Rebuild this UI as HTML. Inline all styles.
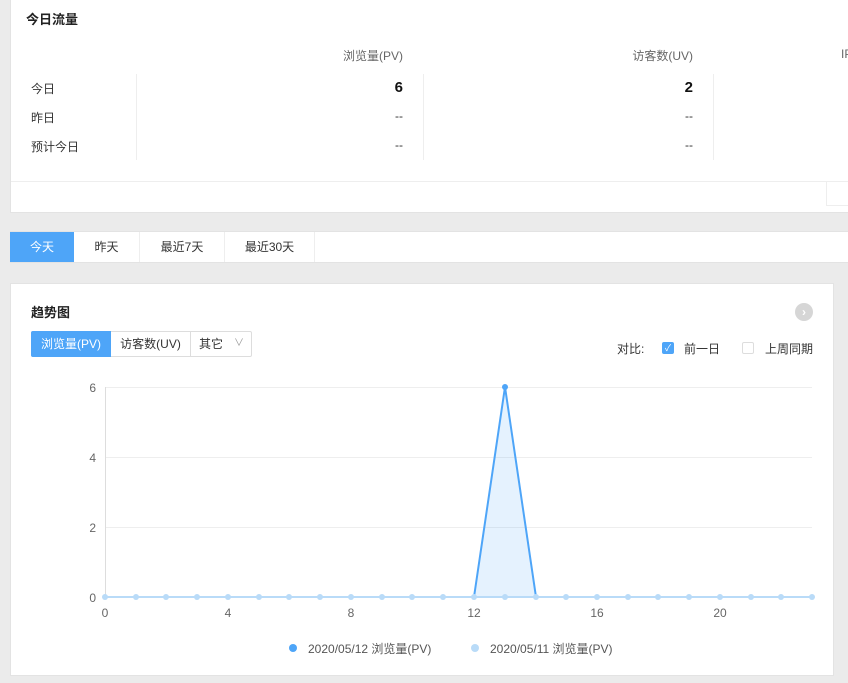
<!DOCTYPE html>
<html><head><meta charset="utf-8"><style>
*{margin:0;padding:0;box-sizing:border-box}
body{width:848px;height:683px;background:#ebebeb;font-family:"Liberation Sans","Noto Sans CJK SC",sans-serif;font-size:12px;color:#333;position:relative;overflow:hidden}
.a{position:absolute}
.card{background:#fff;border:1px solid #e3e3e3}
</style></head><body>
<div class="a card" style="left:10px;top:-1px;width:850px;height:214px"></div>
<div class="a" style="left:26px;top:9px;font-size:13px;font-weight:bold;color:#222">今日流量</div>
<div class="a" style="left:300px;top:47px;width:103px;text-align:right;color:#666">浏览量(PV)</div>
<div class="a" style="left:590px;top:47px;width:103px;text-align:right;color:#666">访客数(UV)</div>
<div class="a" style="left:841px;top:47px;color:#666">IP</div>
<div class="a" style="left:136px;top:74px;width:1px;height:86px;background:#eee"></div>
<div class="a" style="left:423px;top:74px;width:1px;height:86px;background:#eee"></div>
<div class="a" style="left:713px;top:74px;width:1px;height:86px;background:#eee"></div>
<div class="a" style="left:31px;top:80px">今日</div>
<div class="a" style="left:31px;top:109px">昨日</div>
<div class="a" style="left:31px;top:138px">预计今日</div>
<div class="a" style="left:300px;top:79px;width:103px;text-align:right;font-size:15px;font-weight:bold;color:#111">6</div>
<div class="a" style="left:590px;top:79px;width:103px;text-align:right;font-size:15px;font-weight:bold;color:#111">2</div>
<div class="a" style="left:300px;top:109px;width:103px;text-align:right">--</div>
<div class="a" style="left:590px;top:109px;width:103px;text-align:right">--</div>
<div class="a" style="left:300px;top:138px;width:103px;text-align:right">--</div>
<div class="a" style="left:590px;top:138px;width:103px;text-align:right">--</div>
<div class="a" style="left:11px;top:181px;width:840px;height:1px;background:#eee"></div>
<div class="a" style="left:826px;top:182px;width:30px;height:24px;border-left:1px solid #eee;border-bottom:1px solid #eee"></div>

<div class="a" style="left:10px;top:231px;width:840px;height:32px;background:#fff;border-top:1px solid #e3e3e3;border-bottom:1px solid #e3e3e3"></div>
<div class="a" style="left:10px;top:232px;width:64px;height:30px;background:#4ea5f8;color:#fff;text-align:center;line-height:30px">今天</div>
<div class="a" style="left:74px;top:232px;width:66px;height:30px;border-right:1px solid #eee;text-align:center;line-height:30px">昨天</div>
<div class="a" style="left:140px;top:232px;width:85px;height:30px;border-right:1px solid #eee;text-align:center;line-height:30px">最近7天</div>
<div class="a" style="left:225px;top:232px;width:90px;height:30px;border-right:1px solid #eee;text-align:center;line-height:30px">最近30天</div>

<div class="a card" style="left:10px;top:283px;width:824px;height:393px"></div>
<div class="a" style="left:31px;top:302px;font-size:13px;font-weight:bold;color:#222">趋势图</div>
<div class="a" style="left:795px;top:303px;width:18px;height:18px;border-radius:50%;background:#d6d6d6;color:#fff;text-align:center;line-height:18px;font-size:12px;font-weight:bold">›</div>
<div class="a" style="left:31px;top:331px;width:221px;height:26px;border:1px solid #ddd;border-radius:2px"></div>
<div class="a" style="left:31px;top:331px;width:80px;height:26px;background:#4ea5f8;color:#fff;text-align:center;line-height:26px;border-radius:2px 0 0 2px">浏览量(PV)</div>
<div class="a" style="left:111px;top:332px;width:80px;height:24px;border-right:1px solid #ddd;text-align:center;line-height:24px">访客数(UV)</div>
<div class="a" style="left:199px;top:332px;line-height:24px">其它</div>
<div class="a" style="left:234px;top:332px;line-height:24px;color:#999;font-size:10px">∨</div>
<div class="a" style="left:617px;top:340px">对比:</div>
<div class="a" style="left:662px;top:342px;width:12px;height:12px;background:#4ea5f8;border-radius:2px;color:#fff;font-size:9px;line-height:12px;text-align:center">✓</div>
<div class="a" style="left:684px;top:340px">前一日</div>
<div class="a" style="left:742px;top:342px;width:12px;height:12px;border:1px solid #ddd;border-radius:2px"></div>
<div class="a" style="left:765px;top:340px">上周同期</div>

<svg class="a" style="left:0;top:0" width="848" height="683">
<g stroke="#eee" stroke-width="1">
<line x1="105" y1="387.5" x2="812" y2="387.5"/><line x1="105" y1="457.5" x2="812" y2="457.5"/><line x1="105" y1="527.5" x2="812" y2="527.5"/>
</g>
<line x1="105.5" y1="387" x2="105.5" y2="597" stroke="#ddd"/>
<line x1="105" y1="597.5" x2="812" y2="597.5" stroke="#ccc"/>
<g fill="#666" font-size="12" font-family="Liberation Sans,sans-serif" text-anchor="end">
<text x="96" y="392">6</text><text x="96" y="462">4</text><text x="96" y="532">2</text><text x="96" y="602">0</text></g>
<g fill="#666" font-size="12" font-family="Liberation Sans,sans-serif" text-anchor="middle">
<text x="105" y="617">0</text><text x="228" y="617">4</text><text x="351" y="617">8</text><text x="474" y="617">12</text><text x="597" y="617">16</text><text x="720" y="617">20</text></g>
<polygon points="474,597 505,387 536,597" fill="#4ea5f8" fill-opacity="0.15"/>
<polyline points="105,597 474,597 505,387 536,597 812,597" fill="none" stroke="#4ea5f8" stroke-width="2"/>
<line x1="105" y1="597" x2="812" y2="597" stroke="#b9dbf8" stroke-width="2"/>
<g fill="#b9dbf8">
<circle cx="105" cy="597" r="3"/><circle cx="136" cy="597" r="3"/><circle cx="166" cy="597" r="3"/><circle cx="197" cy="597" r="3"/><circle cx="228" cy="597" r="3"/><circle cx="259" cy="597" r="3"/><circle cx="289" cy="597" r="3"/><circle cx="320" cy="597" r="3"/><circle cx="351" cy="597" r="3"/><circle cx="382" cy="597" r="3"/><circle cx="412" cy="597" r="3"/><circle cx="443" cy="597" r="3"/><circle cx="474" cy="597" r="3"/><circle cx="505" cy="597" r="3"/><circle cx="536" cy="597" r="3"/><circle cx="566" cy="597" r="3"/><circle cx="597" cy="597" r="3"/><circle cx="628" cy="597" r="3"/><circle cx="658" cy="597" r="3"/><circle cx="689" cy="597" r="3"/><circle cx="720" cy="597" r="3"/><circle cx="751" cy="597" r="3"/><circle cx="781" cy="597" r="3"/><circle cx="812" cy="597" r="3"/>
</g>
<circle cx="505" cy="387" r="3" fill="#4ea5f8"/>
<circle cx="293" cy="648" r="4" fill="#4ea5f8"/>
<circle cx="475" cy="648" r="4" fill="#b9dbf8"/>
<g fill="#555" font-size="12" font-family="Liberation Sans,Noto Sans CJK SC,sans-serif">
<text x="308" y="653">2020/05/12 浏览量(PV)</text><text x="490" y="653">2020/05/11 浏览量(PV)</text></g>
</svg>
</body></html>
